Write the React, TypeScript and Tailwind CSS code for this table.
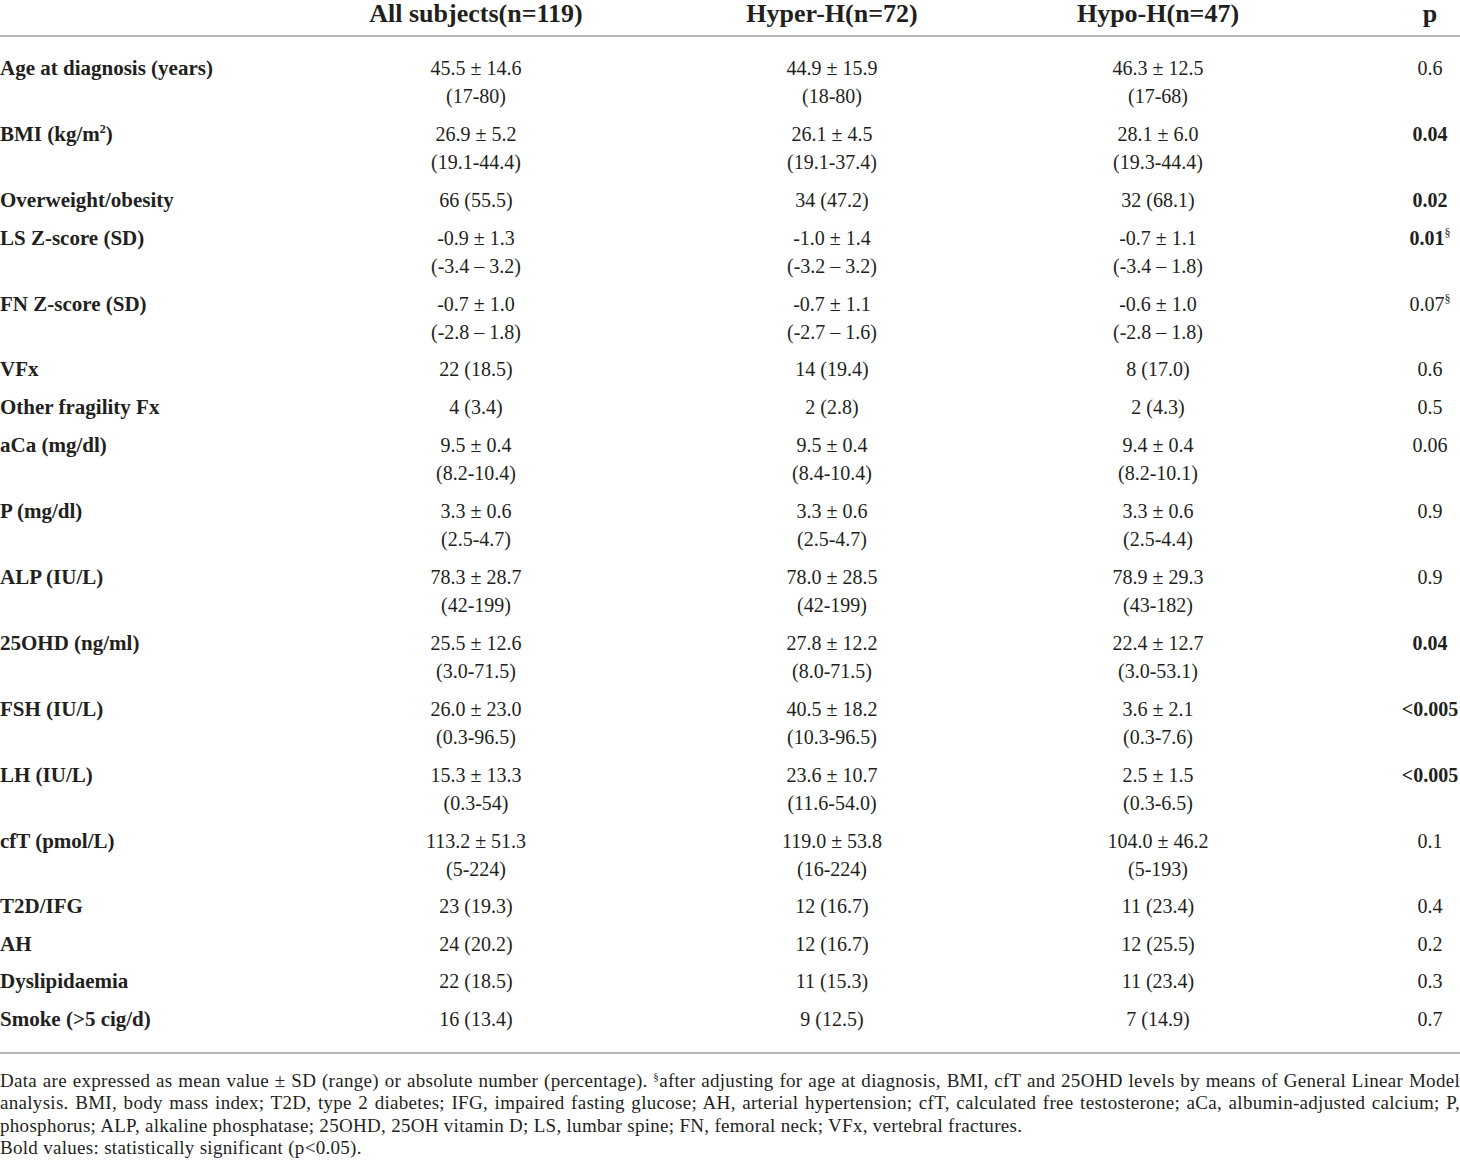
import React from "react";

type Row = {
    label: React.ReactNode,
    all: string[],
    hyper: string[],
    hypo: string[],
    p?: string,
    bold?: boolean,
    sect?: boolean,
}

const rows: Row[] = [
    {label: "Age at diagnosis (years)", all: ["45.5 ± 14.6", "(17-80)"], hyper: ["44.9 ± 15.9", "(18-80)"], hypo: ["46.3 ± 12.5", "(17-68)"], p: "0.6"},
    {label: <>BMI (kg/m<sup className="text-[12px] -top-[8px]">2</sup>)</>, all: ["26.9 ± 5.2", "(19.1-44.4)"], hyper: ["26.1 ± 4.5", "(19.1-37.4)"], hypo: ["28.1 ± 6.0", "(19.3-44.4)"], p: "0.04", bold: true},
    {label: "Overweight/obesity", all: ["66 (55.5)"], hyper: ["34 (47.2)"], hypo: ["32 (68.1)"], p: "0.02", bold: true},
    {label: "LS Z-score (SD)", all: ["-0.9 ± 1.3", "(-3.4 – 3.2)"], hyper: ["-1.0 ± 1.4", "(-3.2 – 3.2)"], hypo: ["-0.7 ± 1.1", "(-3.4 – 1.8)"], p: "0.01", bold: true, sect: true},
    {label: "FN Z-score (SD)", all: ["-0.7 ± 1.0", "(-2.8 – 1.8)"], hyper: ["-0.7 ± 1.1", "(-2.7 – 1.6)"], hypo: ["-0.6 ± 1.0", "(-2.8 – 1.8)"], p: "0.07", sect: true},
    {label: "VFx", all: ["22 (18.5)"], hyper: ["14 (19.4)"], hypo: ["8 (17.0)"], p: "0.6"},
    {label: "Other fragility Fx", all: ["4 (3.4)"], hyper: ["2 (2.8)"], hypo: ["2 (4.3)"], p: "0.5"},
    {label: "aCa (mg/dl)", all: ["9.5 ± 0.4", "(8.2-10.4)"], hyper: ["9.5 ± 0.4", "(8.4-10.4)"], hypo: ["9.4 ± 0.4", "(8.2-10.1)"], p: "0.06"},
    {label: "P (mg/dl)", all: ["3.3 ± 0.6", "(2.5-4.7)"], hyper: ["3.3 ± 0.6", "(2.5-4.7)"], hypo: ["3.3 ± 0.6", "(2.5-4.4)"], p: "0.9"},
    {label: "ALP (IU/L)", all: ["78.3 ± 28.7", "(42-199)"], hyper: ["78.0 ± 28.5", "(42-199)"], hypo: ["78.9 ± 29.3", "(43-182)"], p: "0.9"},
    {label: "25OHD (ng/ml)", all: ["25.5 ± 12.6", "(3.0-71.5)"], hyper: ["27.8 ± 12.2", "(8.0-71.5)"], hypo: ["22.4 ± 12.7", "(3.0-53.1)"], p: "0.04", bold: true},
    {label: "FSH (IU/L)", all: ["26.0 ± 23.0", "(0.3-96.5)"], hyper: ["40.5 ± 18.2", "(10.3-96.5)"], hypo: ["3.6 ± 2.1", "(0.3-7.6)"], p: "<0.005", bold: true},
    {label: "LH (IU/L)", all: ["15.3 ± 13.3", "(0.3-54)"], hyper: ["23.6 ± 10.7", "(11.6-54.0)"], hypo: ["2.5 ± 1.5", "(0.3-6.5)"], p: "<0.005", bold: true},
    {label: "cfT (pmol/L)", all: ["113.2 ± 51.3", "(5-224)"], hyper: ["119.0 ± 53.8", "(16-224)"], hypo: ["104.0 ± 46.2", "(5-193)"], p: "0.1"},
    {label: "T2D/IFG", all: ["23 (19.3)"], hyper: ["12 (16.7)"], hypo: ["11 (23.4)"], p: "0.4"},
    {label: "AH", all: ["24 (20.2)"], hyper: ["12 (16.7)"], hypo: ["12 (25.5)"], p: "0.2"},
    {label: "Dyslipidaemia", all: ["22 (18.5)"], hyper: ["11 (15.3)"], hypo: ["11 (23.4)"], p: "0.3"},
    {label: "Smoke (>5 cig/d)", all: ["16 (13.4)"], hyper: ["9 (12.5)"], hypo: ["7 (14.9)"], p: "0.7"},
];

const Cell = ({lines}: {lines: string[]}) => (
    <div className="text-center">
        {lines.map((l, i) => <div key={i}>{l}</div>)}
    </div>
);

const App: React.FC = () => {
    return (
        <div className="w-[1460px] min-h-[1164px] bg-white text-[#231f20] font-['Liberation_Serif',serif]">
            {/* header */}
            <div className="grid grid-cols-[300px_352px_360px_292px_156px] text-[26px] font-bold leading-[28px] pb-[7px] border-b-2 border-[#b5b5b5]">
                <div></div>
                <div className="text-center">All subjects(n=119)</div>
                <div className="text-center">Hyper-H(n=72)</div>
                <div className="text-center">Hypo-H(n=47)</div>
                <div className="pl-[96px] text-center">p</div>
            </div>

            {/* body */}
            <div className="pt-[12px] pb-[14px] text-[20px] leading-[28px] border-b-2 border-[#b5b5b5]">
                {rows.map((r, i) => (
                    <div
                        key={i}
                        className={`grid grid-cols-[300px_352px_360px_292px_156px] ${r.all.length > 1 ? "py-[5px]" : "py-[4.75px]"}`}
                    >
                        <div className="font-bold text-[21px]">{r.label}</div>
                        <Cell lines={r.all}/>
                        <Cell lines={r.hyper}/>
                        <Cell lines={r.hypo}/>
                        <div className={`pl-[96px] text-center whitespace-nowrap ${r.bold ? "font-bold" : ""}`}>
                            {r.p}
                            {r.sect && <sup className="text-[12px] font-normal -top-[8px]">§</sup>}
                        </div>
                    </div>
                ))}
            </div>

            {/* footnotes */}
            <div className="pt-[16px] text-[19px] leading-[22.5px] tracking-[0.3px]">
                <div className="text-justify [text-align-last:justify]">
                    Data are expressed as mean value ± SD (range) or absolute number (percentage). <sup className="text-[11px] -top-[7px]">§</sup>after adjusting for age at diagnosis, BMI, cfT and 25OHD levels by means of General Linear Model
                </div>
                <div className="text-justify [text-align-last:justify]">
                    analysis. BMI, body mass index; T2D, type 2 diabetes; IFG, impaired fasting glucose; AH, arterial hypertension; cfT, calculated free testosterone; aCa, albumin-adjusted calcium; P,
                </div>
                <div>
                    phosphorus; ALP, alkaline phosphatase; 25OHD, 25OH vitamin D; LS, lumbar spine; FN, femoral neck; VFx, vertebral fractures.
                </div>
                <div>Bold values: statistically significant (p&lt;0.05).</div>
            </div>
        </div>
    );
};

export default App;
